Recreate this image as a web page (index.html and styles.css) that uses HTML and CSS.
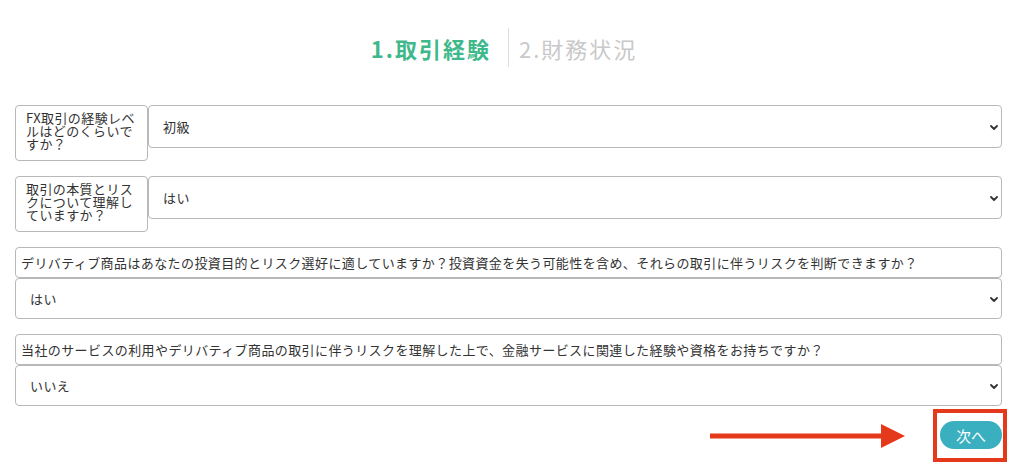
FILE: index.html
```html
<!DOCTYPE html>
<html lang="ja">
<head>
<meta charset="utf-8">
<title>取引経験</title>
<link rel="stylesheet" href="styles.css">
</head>
<body>
<div class="page">
  <header class="steps">
    <div class="step step-active">1.取引経験</div>
    <div class="divider"></div>
    <div class="step step-next">2.財務状況</div>
  </header>

  <form class="form">
    <div class="row row-inline">
      <div class="label label-side">FX取引の経験レベルはどのくらいですか？</div>
      <div class="select-wrap select-inline">
        <select class="select"><option>初級</option></select>
        <svg class="chev" viewBox="0 0 8 5" width="8" height="5"><path d="M1 1 L4 4 L7 1" fill="none" stroke="#333" stroke-width="1.8" stroke-linecap="round" stroke-linejoin="round"/></svg>
      </div>
    </div>

    <div class="row row-inline">
      <div class="label label-side">取引の本質とリスクについて理解していますか？</div>
      <div class="select-wrap select-inline">
        <select class="select"><option>はい</option></select>
        <svg class="chev" viewBox="0 0 8 5" width="8" height="5"><path d="M1 1 L4 4 L7 1" fill="none" stroke="#333" stroke-width="1.8" stroke-linecap="round" stroke-linejoin="round"/></svg>
      </div>
    </div>

    <div class="row row-stack">
      <div class="label label-top">デリバティブ商品はあなたの投資目的とリスク選好に適していますか？投資資金を失う可能性を含め、それらの取引に伴うリスクを判断できますか？</div>
      <div class="select-wrap select-block">
        <select class="select"><option>はい</option></select>
        <svg class="chev" viewBox="0 0 8 5" width="8" height="5"><path d="M1 1 L4 4 L7 1" fill="none" stroke="#333" stroke-width="1.8" stroke-linecap="round" stroke-linejoin="round"/></svg>
      </div>
    </div>

    <div class="row row-stack">
      <div class="label label-top">当社のサービスの利用やデリバティブ商品の取引に伴うリスクを理解した上で、金融サービスに関連した経験や資格をお持ちですか？</div>
      <div class="select-wrap select-block">
        <select class="select"><option>いいえ</option></select>
        <svg class="chev" viewBox="0 0 8 5" width="8" height="5"><path d="M1 1 L4 4 L7 1" fill="none" stroke="#333" stroke-width="1.8" stroke-linecap="round" stroke-linejoin="round"/></svg>
      </div>
    </div>
  </form>

  <div class="footer">
    <svg class="arrow" viewBox="0 0 195 24" width="195" height="24">
      <line x1="0" y1="12" x2="174" y2="12" stroke="#e5391c" stroke-width="5"/>
      <polygon points="171,0 195,12 171,24" fill="#e5391c"/>
    </svg>
    <div class="highlight">
      <button class="next" type="button">次へ</button>
    </div>
  </div>
</div>
</body>
</html>
```

FILE: styles.css
```css
* { box-sizing: border-box; }

html, body {
  margin: 0;
  padding: 0;
  background: #ffffff;
}

body {
  font-family: "Noto Sans CJK JP", "Noto Sans", sans-serif;
  color: #333333;
}

.page {
  width: 1024px;
  padding: 28px 22px 0 15px;
}

/* step header */
.steps {
  display: grid;
  grid-template-columns: 1fr auto 1fr;
  align-items: center;
  height: 39px;
}

.step {
  font-size: 22px;
  letter-spacing: 2px;
  line-height: 30px;
  white-space: nowrap;
}

.step-active {
  justify-self: end;
  padding-right: 17px;
  color: #3fb98b;
  font-weight: 700;
}

.step-next {
  justify-self: start;
  padding-left: 10px;
  color: #c9c9c9;
  font-weight: 400;
}

.divider {
  width: 1px;
  height: 39px;
  background: #dddddd;
}

/* form */
.form {
  display: flex;
  flex-direction: column;
  gap: 15px;
  margin-top: 38px;
}

.row-inline {
  display: flex;
  align-items: flex-start;
}

.row-stack {
  display: flex;
  flex-direction: column;
}

.label {
  border: 1px solid #b8b8b8;
  border-radius: 4px;
  background: #fff;
  font-size: 13px;
  letter-spacing: 0.4px;
  color: #333;
}

.label-side {
  width: 133px;
  height: 56px;
  flex: none;
  padding: 5px 7px 0 10px;
  line-height: 13px;
}

.label-top {
  height: 31px;
  padding: 0 5px;
  line-height: 29px;
  white-space: nowrap;
}

.select-wrap {
  position: relative;
}

.select-inline {
  flex: 1;
  height: 43px;
}

.select-block {
  height: 41px;
}

.select {
  appearance: none;
  -webkit-appearance: none;
  width: 100%;
  height: 100%;
  margin: 0;
  border: 1px solid #b8b8b8;
  border-radius: 4px;
  background: #fff;
  padding: 0 24px 0 14px;
  font-family: "Noto Sans CJK JP", "Noto Sans", sans-serif;
  font-size: 13px;
  letter-spacing: 0.4px;
  color: #333;
}

.chev {
  position: absolute;
  right: 4px;
  top: 50%;
  margin-top: -2px;
}

/* footer */
.footer {
  display: flex;
  justify-content: flex-end;
  align-items: center;
  gap: 28px;
  margin-top: 3px;
  margin-right: -5px;
}

.arrow {
  display: block;
}

.highlight {
  border: 4px solid #e5391c;
  padding: 8px 1px 9px 3px;
}

.next {
  display: block;
  width: 62px;
  height: 28px;
  border: none;
  border-radius: 14px;
  background: #3aafbf;
  color: #ffffff;
  font-family: "Noto Sans CJK JP", "Noto Sans", sans-serif;
  font-size: 15px;
  padding: 0;
}
```
